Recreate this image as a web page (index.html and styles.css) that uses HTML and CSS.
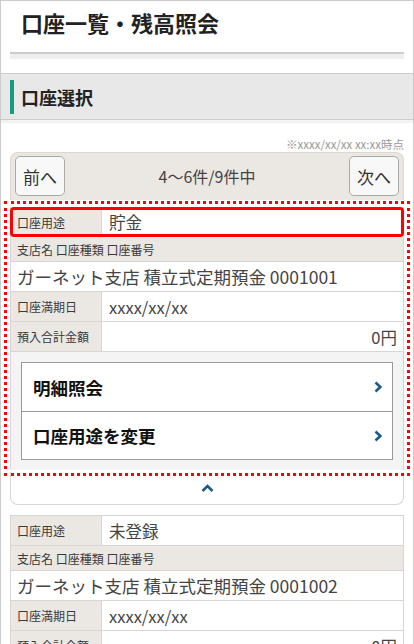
FILE: index.html
```html
<!DOCTYPE html>
<html lang="ja">

<head>
	<meta charset="UTF-8">
	<meta name="viewport" content="width=device-width, initial-scale=1.0">
	<title>口座一覧・残高照会</title>

	<link rel="stylesheet" href="styles.css">
</head>

<body>
	<div class="page">
		<div class="title">
			<h1>口座一覧・残高照会</h1>
			<div class="title-rule"></div>
		</div>

		<div class="sec-head">
			<h2>口座選択</h2>
		</div>

		<div class="content">
			<p class="stamp">※xxxx/xx/xx xx:xx時点</p>

			<div class="pager">
				<button class="pg-btn">前へ</button>
				<span class="pg-count">4〜6件/9件中</span>
				<button class="pg-btn">次へ</button>
			</div>

			<!-- 選択中の口座 -->
			<div class="acct acct-open">
				<div class="row row-hl">
					<div class="lbl">口座用途</div>
					<div class="val">貯金</div>
				</div>
				<div class="row-head">支店名 口座種類 口座番号</div>
				<div class="row-full">ガーネット支店 積立式定期預金 0001001</div>
				<div class="row">
					<div class="lbl">口座満期日</div>
					<div class="val">xxxx/xx/xx</div>
				</div>
				<div class="row">
					<div class="lbl">預入合計金額</div>
					<div class="val val-num">0円</div>
				</div>
				<div class="acct-menu">
					<ul class="menu">
						<li>
							<span>明細照会</span>
							<svg class="chev" width="8" height="12" viewBox="0 0 8 12"><polyline points="1.5,1.5 6.3,6 1.5,10.5" /></svg>
						</li>
						<li>
							<span>口座用途を変更</span>
							<svg class="chev" width="8" height="12" viewBox="0 0 8 12"><polyline points="1.5,1.5 6.3,6 1.5,10.5" /></svg>
						</li>
					</ul>
				</div>
			</div>

			<div class="toggle">
				<svg class="chev" width="13" height="8" viewBox="0 0 13 8"><polyline points="1.5,7 6.5,2 11.5,7" /></svg>
			</div>

			<div class="acct">
				<div class="row">
					<div class="lbl">口座用途</div>
					<div class="val">未登録</div>
				</div>
				<div class="row-head">支店名 口座種類 口座番号</div>
				<div class="row-full">ガーネット支店 積立式定期預金 0001002</div>
				<div class="row">
					<div class="lbl">口座満期日</div>
					<div class="val">xxxx/xx/xx</div>
				</div>
				<div class="row">
					<div class="lbl">預入合計金額</div>
					<div class="val val-num">0円</div>
				</div>
			</div>
		</div>
	</div>
</body>

</html>
```

FILE: styles.css
```css
* {
	margin: 0;
	padding: 0;
	list-style: none;
	box-sizing: border-box;
}

body {
	font-family: "Noto Sans CJK JP", "Noto Sans", sans-serif;
	color: #333;
	overflow: hidden;
}

.page {
	min-height: 644px;
	border: 1px solid #ccc;
	border-bottom: 0;
}

/* タイトル */
.title {
	padding: 6px 9px 0;
}

.title h1 {
	padding-left: 11px;
	font-size: 22px;
	line-height: 30px;
	font-weight: bold;
	color: #222;
}

.title-rule {
	margin-top: 15px;
	height: 7px;
	border-top: 2px solid #ccc;
	background: #eee;
}

/* 見出し */
.sec-head {
	margin-top: 14px;
	padding: 6px 9px 5px;
	background: #e8e8e8;
	border-top: 1px solid #ccc;
	border-bottom: 1px solid #ccc;
	box-shadow: 0 3px 0 #f2f2f2;
}

.sec-head h2 {
	padding-left: 7px;
	border-left: 4px solid #169a7b;
	font-size: 18px;
	line-height: 34px;
	font-weight: bold;
	color: #222;
}

.content {
	padding: 0 9px;
}

.stamp {
	margin-top: 17px;
	text-align: right;
	font-size: 11.5px;
	line-height: 14px;
	color: #999;
}

/* ページ送り */
.pager {
	margin-top: 1px;
	display: flex;
	align-items: center;
	justify-content: space-between;
	padding: 3px 4px 4px;
	background: #ebe7e3;
	border: 1px solid #dcd8d3;
	border-bottom: 0;
	border-radius: 8px 8px 0 0;
}

.pg-btn {
	width: 50px;
	height: 40px;
	border: 1px solid #aaa;
	border-radius: 5px;
	background: #f8f8f8;
	font-family: inherit;
	font-size: 17px;
	color: #333;
}

.pg-count {
	font-size: 16px;
	color: #444;
}

/* 口座テーブル */
.acct {
	border: 1px solid #d6d6d6;
	border-bottom: 0;
}

.acct-open {
	margin-top: 7px;
	border-top: 0;
	outline: 3px dotted #f00;
	outline-offset: 3px;
}

.row {
	display: flex;
	height: 30px;
	border-bottom: 1px solid #d6d6d6;
}

.lbl {
	width: 91px;
	padding-left: 6px;
	display: flex;
	align-items: center;
	background: #ebe7e3;
	border-right: 1px solid #d6d6d6;
	font-size: 12px;
	color: #3a3a3a;
}

.val {
	flex: 1;
	padding: 0 6px 0 7px;
	display: flex;
	align-items: center;
	font-size: 16.5px;
	color: #444;
	background: #fff;
}

.val-num {
	justify-content: flex-end;
}

.row-hl {
	margin: 0 -1px;
	border: 3px solid #f00;
	border-radius: 4px;
	overflow: hidden;
}

.row-hl .lbl {
	width: 89px;
	padding-left: 4px;
}

.row-head {
	height: 25px;
	padding-left: 6px;
	display: flex;
	align-items: center;
	background: #ebe7e3;
	border-bottom: 1px solid #d6d6d6;
	font-size: 12px;
	color: #3a3a3a;
}

.row-full {
	height: 30px;
	padding-left: 6px;
	display: flex;
	align-items: center;
	border-bottom: 1px solid #d6d6d6;
	font-size: 17.5px;
	color: #444;
}

.acct-menu {
	padding: 10px;
	background: #f4f4f4;
}

.menu {
	border: 1px solid #999;
	background: #fff;
}

.menu li {
	height: 48px;
	padding: 0 10px 0 11px;
	display: flex;
	align-items: center;
	justify-content: space-between;
	font-size: 17.5px;
	font-weight: bold;
	color: #111;
}

.menu li + li {
	border-top: 1px solid #999;
}

.chev polyline {
	fill: none;
	stroke: #1d5b87;
	stroke-width: 2.6;
}

.toggle {
	margin: 2px 0 10px;
	height: 33px;
	display: flex;
	align-items: center;
	justify-content: center;
	border: 1px solid #d6d6d6;
	border-top: 0;
	border-radius: 0 0 8px 8px;
}
```
